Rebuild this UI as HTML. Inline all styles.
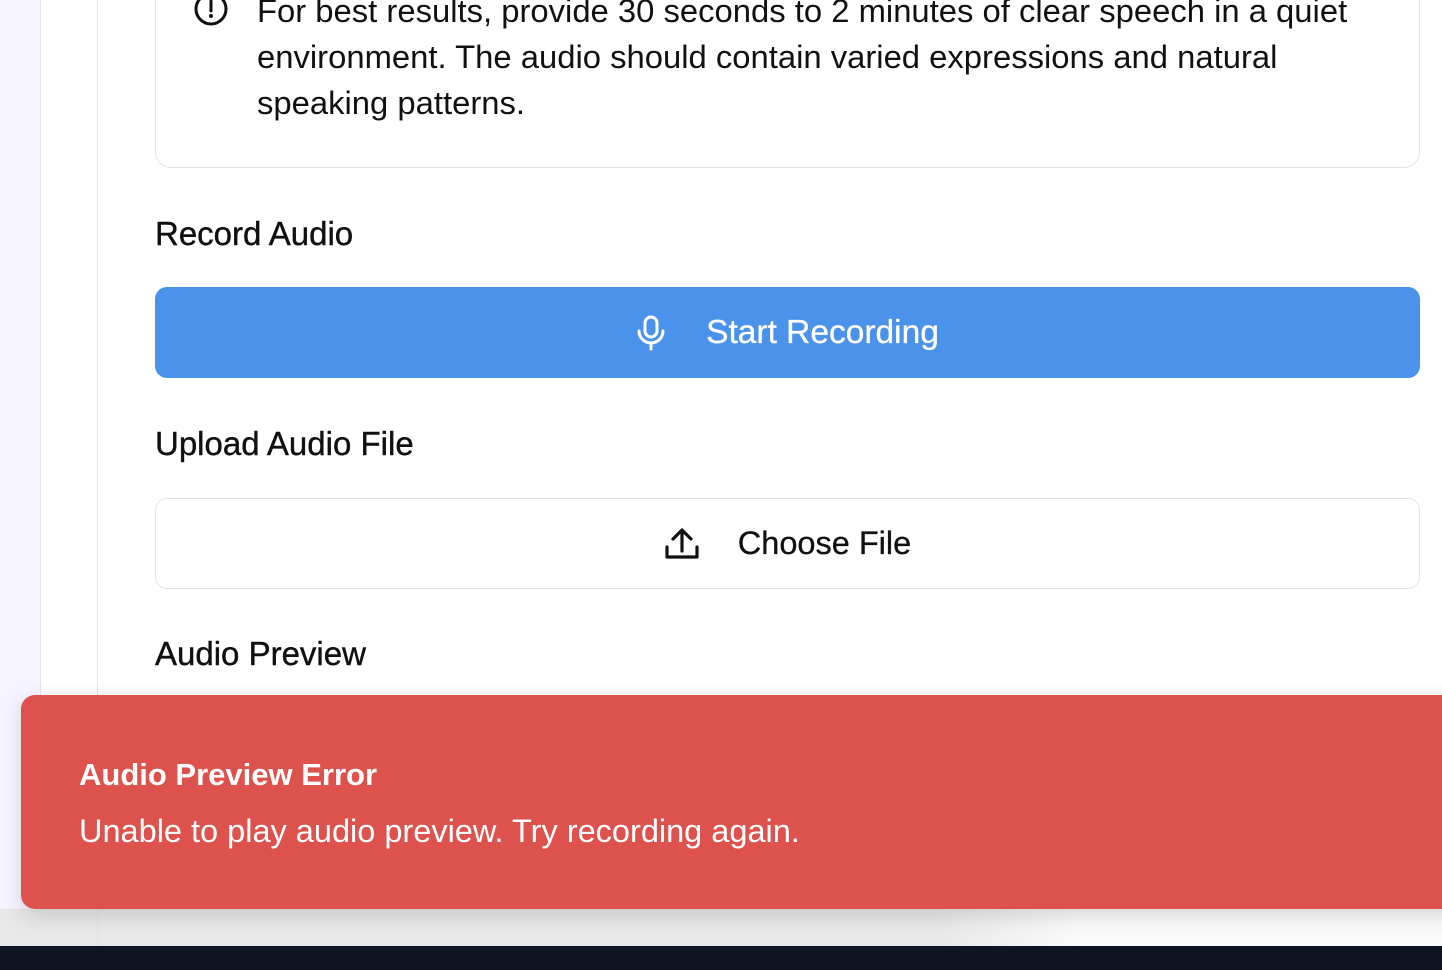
<!DOCTYPE html>
<html><head><style>
*{margin:0;padding:0;box-sizing:border-box}
body{width:1442px;height:970px;overflow:hidden;background:#fff;font-family:"Liberation Sans",sans-serif;color:#111;position:relative}
.side{position:absolute;left:0;top:0;width:41px;height:946px;background:#f6f4fe;border-right:1px solid #e4e4ea}
.vline{position:absolute;left:97px;top:0;width:1px;height:946px;background:#e2e2e6;z-index:2}
.card{position:absolute;left:155px;top:-30px;width:1265px;height:198px;border:1.5px solid #e3e3e6;border-radius:16px}
.info{position:absolute;left:257px;top:-12px;font-size:32.8px;line-height:46px;width:1140px}
.h{position:absolute;left:155px;font-size:33px;-webkit-text-stroke:0.4px #111}
.btn{position:absolute;left:155px;width:1265px;height:91px;border-radius:12px;display:flex;align-items:center;justify-content:center;font-size:32.5px}
.blue{top:287px;background:#4a92ea;color:#fff;font-size:33.5px;-webkit-text-stroke:0.3px #fff}
.file{top:498px;border:1.5px solid #e3e3e6;color:#111;-webkit-text-stroke:0.3px #111}
.toast{position:absolute;left:21px;top:695px;width:1440px;height:214px;background:#dd524c;border-radius:14px 0 0 14px;color:#fff;box-shadow:0 6px 20px rgba(0,0,0,.15);z-index:3}
.bot{position:absolute;left:0;top:909px;width:1442px;height:37px;background:linear-gradient(90deg,#e8e8e8 0%,#e8e8e8 65%,#fafafa 75%)}
.dark{position:absolute;left:0;top:946px;width:1442px;height:24px;background:#0e1422;z-index:4}
</style></head><body>
<div class="side"></div><div class="vline"></div>
<div class="card"></div>
<svg style="position:absolute;left:192px;top:-5px" width="38" height="34" viewBox="0 0 38 34"><circle cx="19" cy="14" r="15" fill="none" stroke="#111" stroke-width="3"/><line x1="19" y1="6" x2="19" y2="16" stroke="#111" stroke-width="3" stroke-linecap="round"/><circle cx="19" cy="21" r="2" fill="#111"/></svg>
<div class="info">For best results, provide 30 seconds to 2 minutes of clear speech in a quiet environment. The audio should contain varied expressions and natural speaking patterns.</div>
<div class="h" style="top:215px">Record Audio</div>
<div class="btn blue"><svg width="30" height="36" viewBox="0 0 30 36" style="margin-right:40px"><rect x="9" y="2" width="12" height="20" rx="6" fill="none" stroke="#fff" stroke-width="3"/><path d="M3 16a12 12 0 0 0 24 0M15 28v6" fill="none" stroke="#fff" stroke-width="3" stroke-linecap="round"/></svg>Start Recording</div>
<div class="h" style="top:425px">Upload Audio File</div>
<div class="btn file"><svg width="36" height="34" viewBox="0 0 36 34" style="margin-right:38px"><path d="M18 24V4M9 12l9-9 9 9M3 20v10h30V20" fill="none" stroke="#111" stroke-width="3.2" stroke-linecap="round" stroke-linejoin="round"/></svg>Choose File</div>
<div class="h" style="top:635px">Audio Preview</div>
<div class="bot"></div>
<div class="toast">
<div style="position:absolute;left:58px;top:62px;font-size:31px;font-weight:700">Audio Preview Error</div>
<div style="position:absolute;left:58px;top:118px;font-size:32.5px">Unable to play audio preview. Try recording again.</div>
</div>
<div class="dark"></div>
</body></html>
